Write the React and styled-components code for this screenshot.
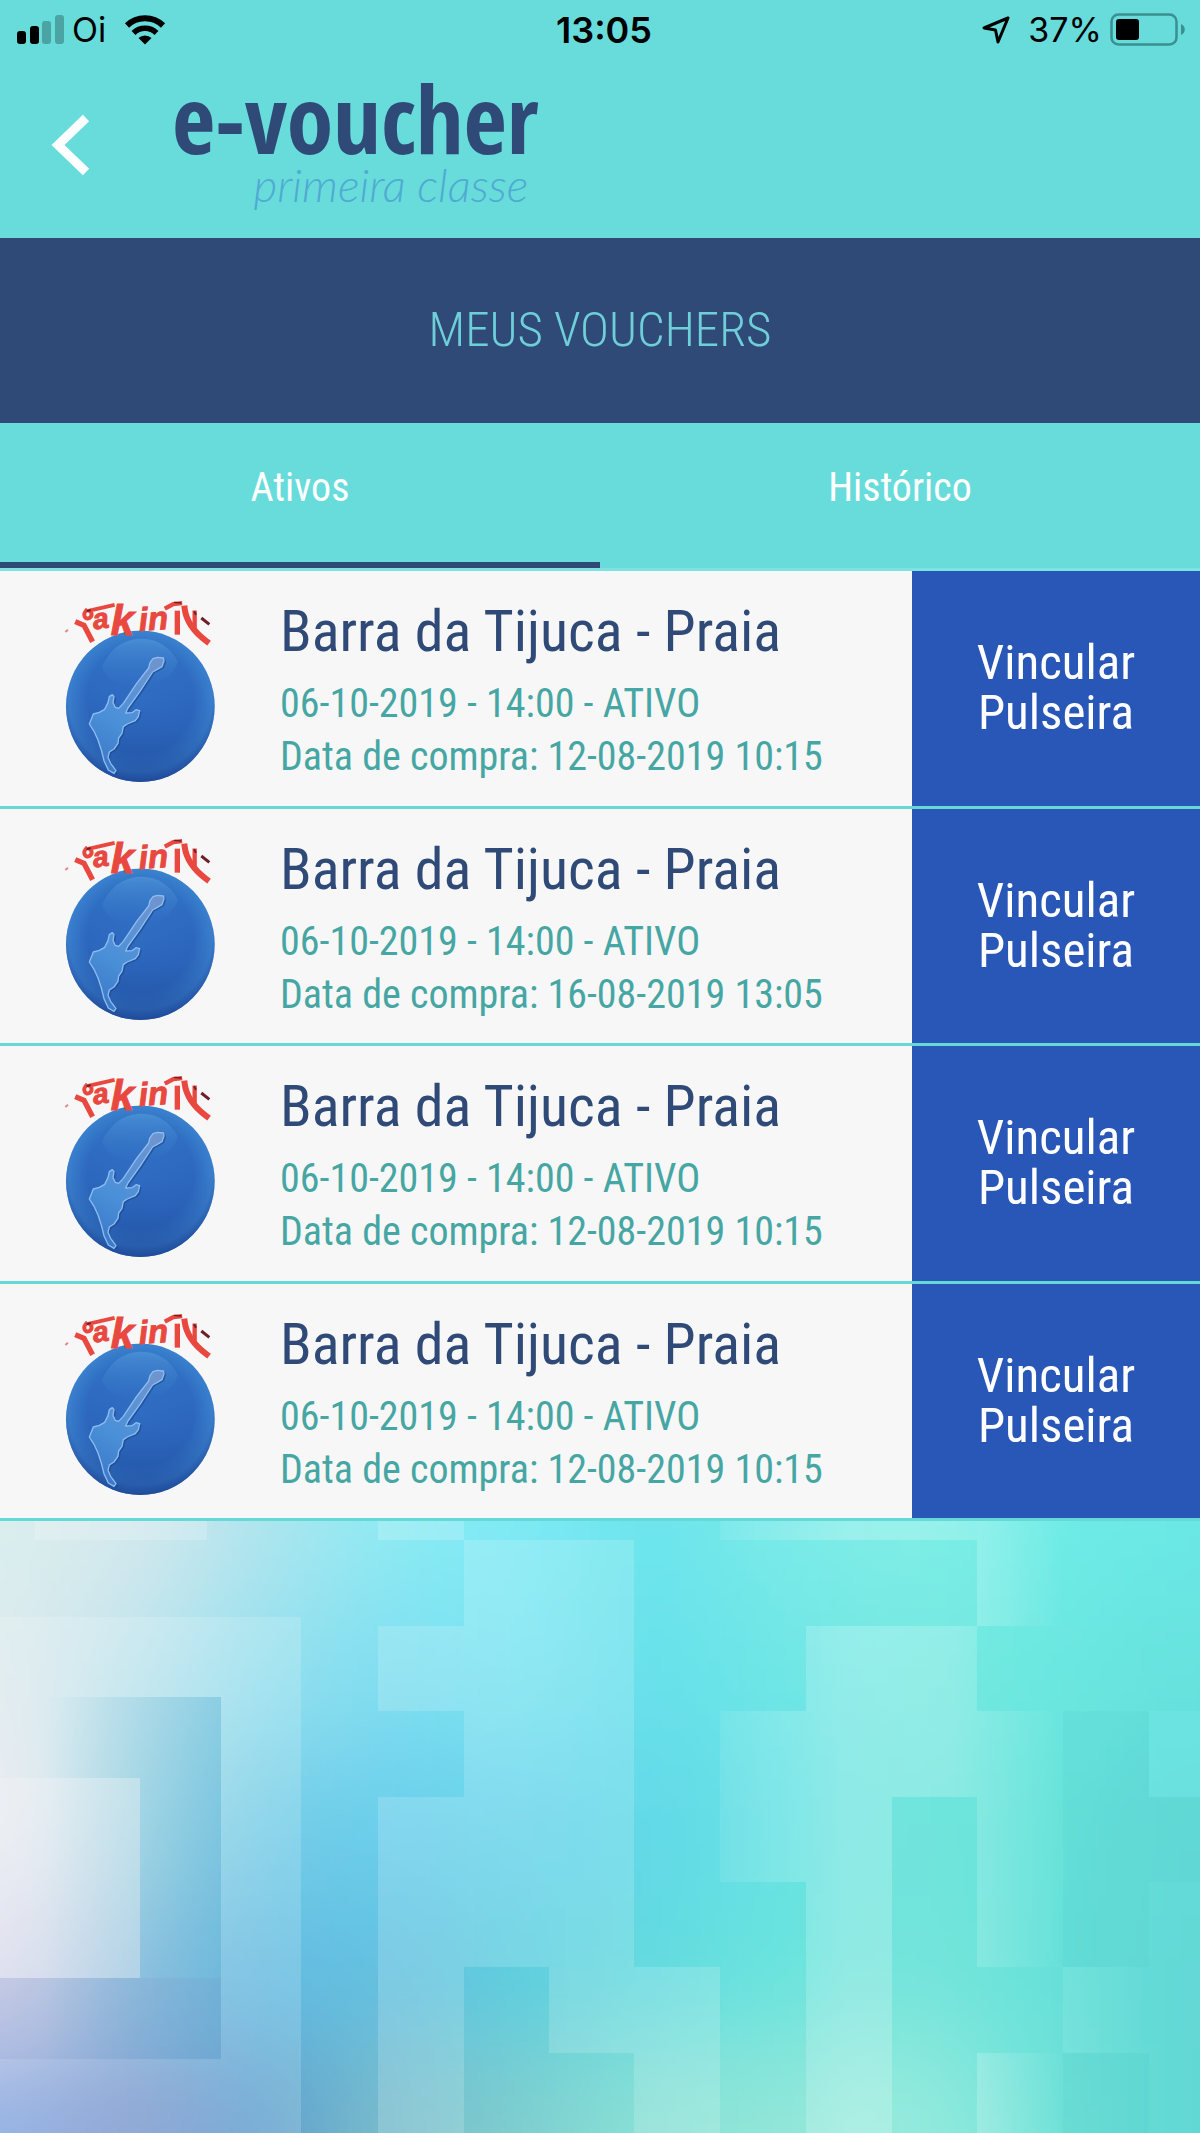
import React, { useState } from 'react';
import styled, { createGlobalStyle } from 'styled-components';

const GlobalStyle = createGlobalStyle`
  * {
    box-sizing: border-box;
  }
  body {
    margin: 0;
    background-color: #67dcdb;
    font-family: 'Roboto Condensed', 'Liberation Sans Narrow', Roboto, sans-serif;
  }
`;

const Page = styled.div`
  display: flex;
  flex-direction: column;
  min-height: 100vh;
`;

const StatusBar = styled.div`
  display: grid;
  grid-template-columns: 1fr auto 1fr;
  align-items: center;
  height: 60px;
  padding: 0 14px 0 16px;
  color: #000;
  font-family: Inter, sans-serif;
  font-size: 34px;
  line-height: 40px;
`;

const StatusGroup = styled.div`
  display: flex;
  align-items: center;
  justify-content: ${props => props.$end ? 'flex-end' : 'flex-start'};
  gap: 8px;
`;

const Clock = styled.time`
  padding-left: 6px;
  font-size: 36px;
  font-weight: 600;
`;

const WifiIcon = styled.svg`
  margin-left: 10px;
`;

const LocationIcon = styled.svg`
  margin-right: 10px;
`;

const Header = styled.header`
  display: flex;
  align-items: flex-start;
  height: 178px;
  padding-left: 44px;
  gap: 74px;
`;

const BackButton = styled.button`
  display: flex;
  margin-top: 48px;
  padding: 4px 6px;
  border: none;
  background: none;
  cursor: pointer;
`;

const Brand = styled.div`
  display: flex;
  flex-direction: column;
  align-items: flex-end;
  padding-top: 22px;
  color: #304a78;
`;

const BrandName = styled.span`
  font-family: 'Noto Sans ExtraCondensed', 'Open Sans Condensed', 'Roboto Condensed', 'Liberation Sans Narrow', sans-serif;
  font-size: 94px;
  font-weight: 800;
  line-height: 72px;
`;

const BrandTagline = styled.span`
  padding-right: 10px;
  color: #50aad2;
  font-family: Lato, sans-serif;
  font-size: 46px;
  font-style: italic;
  font-weight: 300;
  line-height: 62px;
`;

const Banner = styled.h1`
  display: flex;
  align-items: center;
  justify-content: center;
  height: 185px;
  margin: 0;
  padding-bottom: 2px;
  background-color: #304a78;
  color: #6fcfd8;
  font-size: 49px;
  font-weight: 300;
`;

const Tabs = styled.div`
  display: flex;
  height: 148px;
  border-bottom: 3px solid #7fe2e2;
`;

const Tab = styled.button`
  flex: 1;
  padding: 0 0 10px;
  border: none;
  border-bottom: 6px solid ${props => props.$active ? '#304a78' : 'transparent'};
  background: none;
  color: #fff;
  font-family: inherit;
  font-size: 40px;
  cursor: pointer;
`;

const VoucherList = styled.ul`
  display: grid;
  grid-auto-rows: 1fr;
  min-height: 950px;
  margin: 0;
  padding: 0;
  list-style: none;
`;

const VoucherItem = styled.li`
  display: flex;
  border-bottom: 3px solid #67d8d8;
  background-color: #f7f7f7;
`;

const VoucherLogo = styled.div`
  flex: none;
  width: 280px;
  padding: 22px 0 0 63px;
`;

const VoucherInfo = styled.div`
  flex: 1;
  padding-top: 26px;
  color: #46a6a3;
  font-size: 40px;
  line-height: 53px;
`;

const VoucherTitle = styled.h2`
  margin: 0 0 12px;
  color: #304a78;
  font-size: 58px;
  font-weight: 400;
  line-height: 68px;
`;

const VoucherLine = styled.p`
  margin: 0;
`;

const LinkButton = styled.button`
  flex: none;
  width: 288px;
  padding: 0 60px;
  border: none;
  background-color: #2957b7;
  color: #fff;
  font-family: inherit;
  font-size: 49px;
  line-height: 50px;
  cursor: pointer;
`;

const Backdrop = styled.svg`
  display: block;
  flex: 1;
  width: 100%;
  min-height: 0;
`;

const vouchers = [
  { id: 1, place: 'Barra da Tijuca - Praia', date: '06-10-2019 - 14:00', status: 'ATIVO', bought: '12-08-2019 10:15' },
  { id: 2, place: 'Barra da Tijuca - Praia', date: '06-10-2019 - 14:00', status: 'ATIVO', bought: '16-08-2019 13:05' },
  { id: 3, place: 'Barra da Tijuca - Praia', date: '06-10-2019 - 14:00', status: 'ATIVO', bought: '12-08-2019 10:15' },
  { id: 4, place: 'Barra da Tijuca - Praia', date: '06-10-2019 - 14:00', status: 'ATIVO', bought: '12-08-2019 10:15' }
];

// colours of the backdrop, top to bottom, every 130 x 150 units
const mesh = [
  ['#daefee', '#d6e8ec', '#aee4ee', '#8cebf3', '#7eeaf5', '#6ae4ec', '#7aeae8', '#80eee6', '#70ece6', '#6ae8e6'],
  ['#e0eaee', '#c0e4ec', '#94e0ee', '#80def0', '#7ae4f2', '#66e0ea', '#6ee6e6', '#78e8e0', '#6ae8e0', '#68e2de'],
  ['#ebeaf2', '#a8dce4', '#74cce6', '#6acfec', '#68d4ea', '#62d8e8', '#68e2e4', '#70e4dc', '#68e4da', '#64dad8'],
  ['#d4d2e8', '#88bcdc', '#64bce2', '#62c0e0', '#5ccede', '#62dadf', '#68e4de', '#76e4da', '#66e2da', '#64d8d6'],
  ['#80a6e0', '#7e94cc', '#5c9ccc', '#7abcca', '#7ecece', '#8ae2d6', '#92e6d8', '#98ecde', '#70e2d8', '#62d8d4']
];

const Mosaic = () => (
  <Backdrop viewBox="0 0 1200 612" preserveAspectRatio="xMidYMin slice" aria-hidden="true">
    <defs>
      <filter id="soften" filterUnits="userSpaceOnUse" x="-200" y="-200" width="1600" height="1012">
        <feGaussianBlur stdDeviation="55" />
      </filter>
      <linearGradient id="fade" x1="0" x2="1" y1="0" y2="0">
        <stop offset="0" stopColor="#fff" stopOpacity="0.2" />
        <stop offset="1" stopColor="#fff" stopOpacity="0" />
      </linearGradient>
      <linearGradient id="glow" gradientUnits="userSpaceOnUse" x1="700" x2="1063" y1="0" y2="0">
        <stop offset="0" stopColor="#fff" stopOpacity="0.06" />
        <stop offset="0.4" stopColor="#fff" stopOpacity="0.22" />
        <stop offset="0.7" stopColor="#fff" stopOpacity="0.2" />
        <stop offset="1" stopColor="#fff" stopOpacity="0" />
      </linearGradient>
      <linearGradient id="shade" x1="0" x2="1" y1="0" y2="0">
        <stop offset="0.2" stopColor="#3a9cc8" stopOpacity="0" />
        <stop offset="1" stopColor="#3a9cc8" stopOpacity="0.3" />
      </linearGradient>
    </defs>
    <g filter="url(#soften)">
      {mesh.map((row, y) => row.map((color, x) => (
        <rect
          key={`${x}-${y}`}
          x={x === 0 ? -200 : x * 130 - 65}
          y={y === 0 ? -200 : y * 150 - 75}
          width={x === 0 ? 266 : x === 9 ? 400 : 131}
          height={y === 0 ? 326 : y === 4 ? 400 : 151}
          fill={color}
        />
      )))}
    </g>
    <path d="M35 0H207V19H35ZM378 0H464V19H378Z" fill="#fff" fillOpacity="0.18" />
    <path d="M0 96H301V612H0Z" fill="#fff" fillOpacity="0.16" />
    <path d="M0 176H221V538H0Z" fill="url(#shade)" />
    <path d="M0 457H221V538H0Z" fill="#7a8cc8" fillOpacity="0.16" />
    <path d="M0 257H140V457H0Z" fill="#f4f4f8" fillOpacity="0.36" />
    <path d="M464 19H634V446H720V612H634V532H549V446H464V612H378V276H464V190H378V105H464Z" fill="#fff" fillOpacity="0.16" />
    <path d="M720 0H977V19H720ZM806 105H977V190H1063V446H977V276H892V612H806V361H720V190H806Z" fill="url(#glow)" />
    <path d="M977 0H1063V105H977ZM977 532H1063V612H977Z" fill="url(#fade)" />
    <path d="M1063 446H1149V532H1063Z" fill="url(#fade)" fillOpacity="0.4" />
    <path d="M1063 190H1149V446H1063ZM1063 532H1149V612H1063ZM1149 276H1200V361H1149Z" fill="#4cc4c8" fillOpacity="0.14" />
    <path d="M1149 190H1200V276H1149Z" fill="#7af0ee" fillOpacity="0.25" />
  </Backdrop>
);

const FestivalLogo = () => (
  <svg width="154" height="190" viewBox="69 69 462 570" role="img" aria-label="Festival">
    <defs>
      <radialGradient id="ball" cx="0.5" cy="0.45" r="0.55">
        <stop offset="0" stopColor="#2f6cc4" />
        <stop offset="0.65" stopColor="#2c66bf" />
        <stop offset="0.88" stopColor="#3f86d3" />
        <stop offset="1" stopColor="#275aa8" />
      </radialGradient>
      <linearGradient id="depth" x1="0" x2="0" y1="0" y2="1">
        <stop offset="0" stopColor="#3a88d0" stopOpacity="0.5" />
        <stop offset="0.45" stopColor="#2e6cbe" stopOpacity="0.3" />
        <stop offset="1" stopColor="#1c4696" stopOpacity="0.75" />
      </linearGradient>
      <linearGradient id="gloss" x1="0" x2="0" y1="0" y2="1">
        <stop offset="0" stopColor="#6cb4ea" stopOpacity="0.35" />
        <stop offset="1" stopColor="#4a90d8" stopOpacity="0" />
      </linearGradient>
      <linearGradient id="guitar" x1="0.7" x2="0.3" y1="0" y2="1">
        <stop offset="0" stopColor="#6e94d0" />
        <stop offset="0.6" stopColor="#4a90d8" />
        <stop offset="1" stopColor="#3c78c8" />
      </linearGradient>
    </defs>
    <ellipse cx="301" cy="409" rx="223" ry="227" fill="url(#ball)" />
    <ellipse cx="301" cy="409" rx="223" ry="227" fill="url(#depth)" />
    <path d="M186 290C216 225 262 206 306 206C352 206 392 232 414 276C392 330 350 345 290 352C236 350 200 330 186 290Z" fill="url(#gloss)" />
    <path
      d="M339 266L352 262L370 264L372 272L366 290L352 298L338 306L300 364L264 414L257 429L276 428L288 419L299 422L295 440L286 452L262 462L250 470L246 490L236 504L234 520L222 537L208 546L204 562L212 580L228 602L222 610L205 600L192 572L184 540L174 510L162 484L148 462L160 432L178 427L194 418L204 398L208 380L217 374L222 380L219 398L226 412L236 415L250 400L290 340L326 294L330 278Z"
      transform="translate(6 4)"
      fill="#1b4488"
      fillOpacity="0.6"
    />
    <path
      d="M339 266L352 262L370 264L372 272L366 290L352 298L338 306L300 364L264 414L257 429L276 428L288 419L299 422L295 440L286 452L262 462L250 470L246 490L236 504L234 520L222 537L208 546L204 562L212 580L228 602L222 610L205 600L192 572L184 540L174 510L162 484L148 462L160 432L178 427L194 418L204 398L208 380L217 374L222 380L219 398L226 412L236 415L250 400L290 340L326 294L330 278Z"
      fill="url(#guitar)"
      stroke="#8dbdf0"
      strokeWidth="4"
      strokeLinejoin="round"
    />
    <g fill="#e8483f" stroke="#e8483f" strokeWidth="3" fontFamily="'Liberation Sans', sans-serif" fontWeight="700" fontStyle="italic">
      <text x="158" y="176" fontSize="86" transform="rotate(-8 180 150)">a</text>
      <text x="212" y="194" fontSize="126">k</text>
      <text x="296" y="180" fontSize="98" transform="rotate(-4 340 140)">in</text>
    </g>
    <g fill="none" stroke="#e8483f" strokeWidth="16" strokeLinecap="square">
      <path d="M113 158L132 166L154 208" />
      <path d="M138 122C126 134 136 150 148 144C158 138 156 126 148 122L218 106" strokeWidth="12" />
      <path d="M380 113L400 102L420 100" strokeWidth="13" />
      <path d="M412 130V186" />
      <path d="M434 116C438 150 462 186 500 214" strokeWidth="18" />
      <path d="M464 128V172" strokeWidth="13" />
    </g>
    <g fill="none" stroke="#6d1f26" strokeWidth="8">
      <path d="M140 124L152 120" strokeWidth="6" />
      <path d="M402 97L424 99" strokeWidth="4" />
      <path d="M484 144L508 163" strokeWidth="9" />
      <path d="M462 124L468 134" strokeWidth="6" />
    </g>
    <path d="M76 186L84 179" stroke="#d98c8c" strokeWidth="6" />
  </svg>
);

const Voucher = ({ voucher }) => (
  <VoucherItem>
    <VoucherLogo><FestivalLogo /></VoucherLogo>
    <VoucherInfo>
      <VoucherTitle>{voucher.place}</VoucherTitle>
      <VoucherLine>{voucher.date} - {voucher.status}</VoucherLine>
      <VoucherLine>Data de compra: {voucher.bought}</VoucherLine>
    </VoucherInfo>
    <LinkButton type="button">Vincular Pulseira</LinkButton>
  </VoucherItem>
);

const App = () => {
  const [tab, setTab] = useState('ativos');

  return (
    <Page>
      <GlobalStyle />
      <StatusBar>
        <StatusGroup>
          <svg width="48" height="30" viewBox="0 0 48 30" aria-hidden="true">
            <rect x="1" y="16" width="9" height="13" rx="3" />
            <rect x="14" y="11" width="9" height="18" rx="3" />
            <rect x="26" y="6" width="9" height="23" rx="3" fill="#4ba3a3" />
            <rect x="39" y="0" width="9" height="29" rx="3" fill="#4ba3a3" />
          </svg>
          <span>Oi</span>
          <WifiIcon width="42" height="30" viewBox="0 0 42 30" aria-hidden="true">
            <path d="M3 10.500A26 26 0 0 1 39 10.500" fill="none" stroke="#000" strokeWidth="6" />
            <path d="M9.500 18A16.500 16.500 0 0 1 32.500 18" fill="none" stroke="#000" strokeWidth="5.500" />
            <path d="M21 29.500L14.500 23A9.500 9.500 0 0 1 27.500 23Z" />
          </WifiIcon>
        </StatusGroup>
        <Clock>13:05</Clock>
        <StatusGroup $end>
          <LocationIcon width="28" height="28" viewBox="0 0 28 28" aria-hidden="true">
            <path d="M26 2L2 12L13.500 14L16 26Z" fill="none" stroke="#000" strokeWidth="3" strokeLinejoin="round" />
          </LocationIcon>
          <span>37%</span>
          <svg width="76" height="34" viewBox="0 0 76 34" aria-hidden="true">
            <rect x="1.500" y="1.500" width="65" height="30" rx="7" fill="none" stroke="#3a8f90" strokeWidth="2.500" />
            <rect x="6" y="6" width="23" height="21" rx="3" />
            <path d="M71 11C76 13 76 20 71 22Z" fill="#3a8f90" />
          </svg>
        </StatusGroup>
      </StatusBar>
      <Header>
        <BackButton type="button" aria-label="Voltar">
          <svg width="42" height="66" viewBox="0 0 42 66" aria-hidden="true">
            <path d="M36 6L8 33L36 60" fill="none" stroke="#fff" strokeWidth="9" />
          </svg>
        </BackButton>
        <Brand>
          <BrandName>e-voucher</BrandName>
          <BrandTagline>primeira classe</BrandTagline>
        </Brand>
      </Header>
      <Banner>MEUS VOUCHERS</Banner>
      <Tabs role="tablist">
        <Tab type="button" role="tab" aria-selected={tab === 'ativos'} $active={tab === 'ativos'} onClick={() => setTab('ativos')}>Ativos</Tab>
        <Tab type="button" role="tab" aria-selected={tab === 'historico'} $active={tab === 'historico'} onClick={() => setTab('historico')}>Histórico</Tab>
      </Tabs>
      <VoucherList>
        {vouchers.map(voucher => <Voucher key={voucher.id} voucher={voucher} />)}
      </VoucherList>
      <Mosaic />
    </Page>
  );
};

export default App;
